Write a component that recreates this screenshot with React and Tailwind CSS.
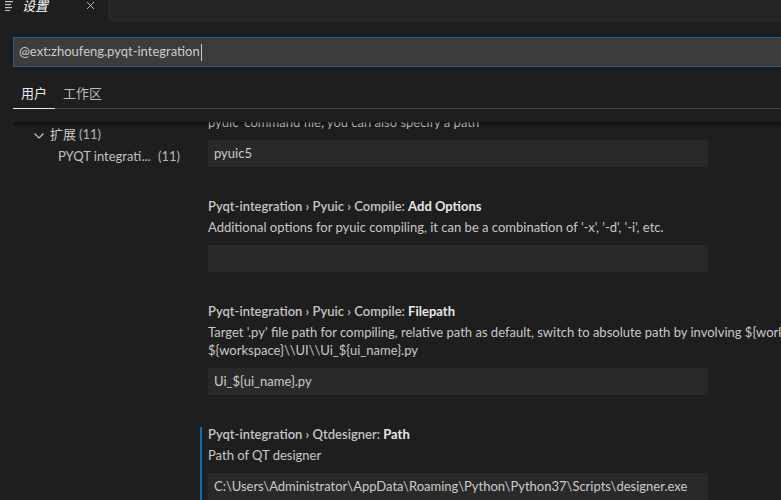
import { X } from 'lucide-react';

const font = { fontFamily: '"Lato", "Noto Sans CJK SC", sans-serif' };

const SettingItem = ({ category, label, desc, value, focused }) => (
  <div className="relative pt-[12px] pb-[18px]">
    {focused && <div className="absolute left-[-8px] top-[14px] bottom-0 w-[2px] bg-[#0f6ea8]" />}
    <div className="h-[18px] leading-[18px] text-[13px] text-[#c5c5c5] font-semibold whitespace-nowrap">
      {category}
      <span className="font-bold text-[#e7e7e7]">{label}</span>
    </div>
    {desc.map((line, i) => (
      <div key={i} className={`leading-[18px] text-[13px] text-[#c8c8c8] whitespace-nowrap ${i === 0 ? 'mt-[3px]' : ''}`}>
        {line}
      </div>
    ))}
    <div className="mt-[9px] h-[27px] w-[500px] bg-[#292929] pl-[6px] flex items-center text-[13px] text-[#cccccc] whitespace-nowrap">
      {value}
    </div>
  </div>
);

export default function App() {
  return (
    <div className="w-[781px] h-[500px] overflow-hidden bg-[#1e1e1e] flex flex-col" style={font}>
      {/* tab bar */}
      <div className="h-[22px] shrink-0 bg-[#252526] flex">
        <div className="w-[108px] bg-[#1e1e1e] flex items-start pl-[5px] pr-[11px]">
          <svg width="8" height="10" viewBox="0 0 8 10" className="mt-[1px]">
            <rect x="0" y="0" width="8" height="1.2" fill="#c5c5c5" />
            <rect x="0" y="3" width="6" height="1.2" fill="#c5c5c5" />
            <rect x="0" y="6" width="7" height="1.2" fill="#c5c5c5" />
            <rect x="0" y="9" width="5" height="1.2" fill="#c5c5c5" />
          </svg>
          <span className="ml-[9px] -mt-[3px] text-[13px] italic text-white leading-[18px]">设置</span>
          <X size={13} strokeWidth={1.6} className="ml-auto -mt-[1px] text-[#d0d0d0]" />
        </div>
      </div>

      {/* header */}
      <div className="shrink-0 pl-[13px]">
        <div className="mt-[15px] h-[30px] bg-[#3c3c3c] border border-[#17609a] border-r-0 flex items-center pl-[5px] text-[13px] text-[#cccccc]">
          @ext:zhoufeng.pyqt-integration
          <span className="ml-[1px] w-[1px] h-[17px] bg-[#cccccc]" />
        </div>
        <div className="mt-[15px] flex h-[27px] border-b border-[#3f3f3f] text-[13px]">
          <div className="w-[42px] flex justify-center pt-[2px] text-[#e7e7e7] border-b border-[#e7e7e7] -mb-[1px]">用户</div>
          <div className="ml-[8px] pt-[2px] text-[#bbbbbb]">工作区</div>
        </div>
      </div>

      {/* body */}
      <div className="relative mt-[13px] ml-[13px] flex-1 overflow-hidden flex">
        <div className="absolute inset-x-0 top-0 h-[6px] shadow-[inset_0_6px_6px_-6px_#000] z-10" />
        <div className="w-[187px] shrink-0 pt-[2px] text-[13px]">
          <div className="h-[22px] flex items-center pl-[21px] text-[#cccccc]">
            <svg width="10" height="6" viewBox="0 0 10 6" className="mt-[1px]">
              <path d="M0.5 0.5 L5 5 L9.5 0.5" stroke="#c5c5c5" strokeWidth="1.2" fill="none" />
            </svg>
            <span className="ml-[6px]">扩展</span>
            <span className="ml-[3px] text-[#b4b4b4]">(11)</span>
          </div>
          <div className="h-[22px] flex items-center pl-[45px] text-[#c0c0c0] whitespace-nowrap">
            <span className="w-[100px]">PYQT integrati...</span>
            <span className="text-[#b4b4b4]">(11)</span>
          </div>
        </div>
        <div className="flex-1 pl-[8px] -mt-[9px]">
          <div className="pb-[18px]">
            <div className="leading-[18px] text-[13px] text-[#c8c8c8] whitespace-nowrap">pyuic' command file, you can also specify a path</div>
            <div className="mt-[9px] h-[27px] w-[500px] bg-[#292929] pl-[6px] flex items-center text-[13px] text-[#cccccc]">pyuic5</div>
          </div>
          <SettingItem
            category="Pyqt-integration › Pyuic › Compile: "
            label="Add Options"
            desc={["Additional options for pyuic compiling, it can be a combination of '-x', '-d', '-i', etc."]}
            value=""
          />
          <SettingItem
            category="Pyqt-integration › Pyuic › Compile: "
            label="Filepath"
            desc={[
              "Target '.py' file path for compiling, relative path as default, switch to absolute path by involving ${workspace}, e.g.",
              '${workspace}\\\\UI\\\\Ui_${ui_name}.py',
            ]}
            value="Ui_${ui_name}.py"
          />
          <SettingItem
            category="Pyqt-integration › Qtdesigner: "
            label="Path"
            desc={['Path of QT designer']}
            value={'C:\\Users\\Administrator\\AppData\\Roaming\\Python\\Python37\\Scripts\\designer.exe'}
            focused
          />
        </div>
      </div>
    </div>
  );
}
